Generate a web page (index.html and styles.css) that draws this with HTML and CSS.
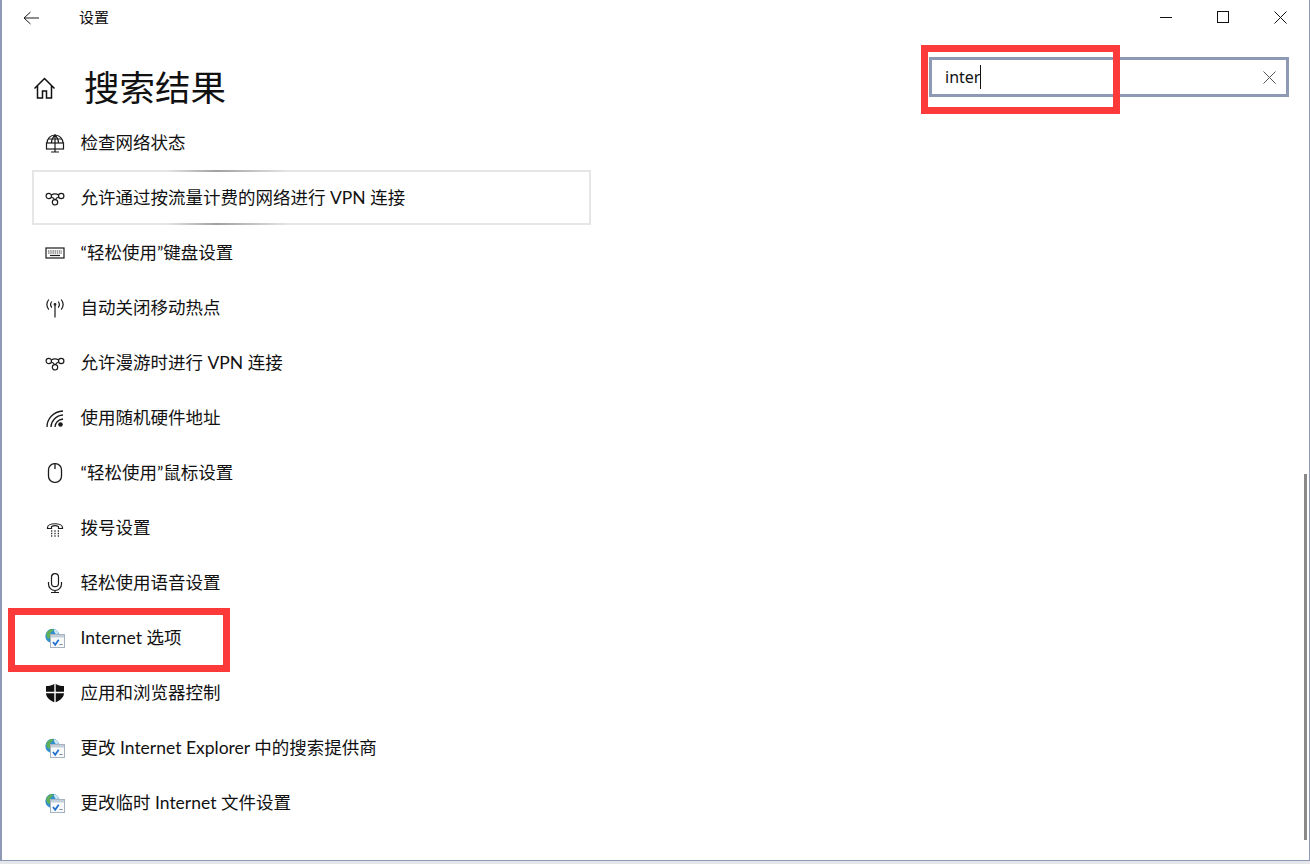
FILE: index.html
```html
<!DOCTYPE html>
<html lang="zh-CN">
<head>
<meta charset="utf-8">
<title>设置</title>
<link rel="stylesheet" href="styles.css">
</head>
<body>
<svg class="defs" width="0" height="0" aria-hidden="true">
  <defs>
    <symbol id="vpn" viewBox="0 0 20 20">
      <g fill="none" stroke="#1a1a1a" stroke-width="1.200">
        <circle cx="3.800" cy="8" r="2.700"/><circle cx="16.200" cy="8" r="2.700"/><circle cx="10" cy="14.300" r="2.700"/>
        <path d="M6.300 9c1.700.7 2.900 1.800 3.300 2.800M13.700 9c-1.700.7-2.900 1.800-3.300 2.800M6.300 7c2.200-1.400 5.200-1.400 7.400 0"/>
      </g>
    </symbol>
    <symbol id="ie" viewBox="0 0 20 20">
      <circle cx="7.500" cy="8" r="7.200" fill="#2f8fd0"/>
      <path d="M1.500 5c1.500-2.500 4-4 6-4 1.500 0 1 2-.5 2.500S5 6 5.500 8 4.500 11.500 3 10.500 1 7 1.500 5z" fill="#5fae5a"/>
      <path d="M9 1.200c2.500.5 4.300 2 5 4.300l-3 .5C10 5 8.500 3 9 1.200z" fill="#cfe6f3"/>
      <rect x="5.500" y="6.500" width="14" height="13" fill="#f7f9fb" stroke="#a7b3bf" stroke-width="1"/>
      <rect x="6" y="7" width="13" height="2.500" fill="#c3cfda"/>
      <path d="M8 14l2.200 2.800 3.500-5" fill="none" stroke="#1f6fd0" stroke-width="1.700"/>
      <path d="M14.500 16.500h3" stroke="#7d8a96" stroke-width="1"/>
    </symbol>
  </defs>
</svg>
<div class="window">
  <header class="titlebar">
    <svg class="back" width="16" height="14" viewBox="0 0 16 14"><path d="M7.500 1L1 7l6.500 6M1 7h15" fill="none" stroke="#1a1a1a" stroke-width="1"/></svg>
    <span class="app-name">设置</span>
    <div class="controls">
      <svg width="13" height="13" viewBox="0 0 13 13"><path d="M0 6.500h12" stroke="#111" stroke-width="1"/></svg>
      <svg width="13" height="13" viewBox="0 0 13 13"><rect x="0.500" y="0.500" width="11" height="11" fill="none" stroke="#111" stroke-width="1"/></svg>
      <svg width="13" height="13" viewBox="0 0 13 13"><path d="M0.500 0.500l12 12M12.500 0.500l-12 12" stroke="#111" stroke-width="1"/></svg>
    </div>
  </header>
  <div class="header">
    <svg class="home" width="23" height="23" viewBox="0 0 23 23"><path d="M1.500 11.500L11.500 1.500l10 10M4.500 9v12h5v-7h4v7h5V9" fill="none" stroke="#111" stroke-width="1.500"/></svg>
    <h1>搜索结果</h1>
    <div class="search">
      <span class="query">inter</span><span class="caret"></span>
      <svg class="clear" width="13" height="13" viewBox="0 0 13 13"><path d="M0.500 0.500l12 12M12.500 0.500l-12 12" stroke="#555" stroke-width="1"/></svg>
    </div>
  </div>
  <ul class="results">
    <li class="row">
      <svg class="ico" width="20" height="20" viewBox="0 0 20 20"><g fill="none" stroke="#1a1a1a" stroke-width="1.200"><path d="M2 10a8 8 0 0 1 16 0"/><path d="M6.500 10c0-3 1.500-6 3.500-8 2 2 3.500 5 3.500 8M10 2v8M3 6h14"/><rect x="1.500" y="10" width="17" height="6"/><path d="M10 16v3M6 19h8M10 10v6"/></g></svg>
      <span>检查网络状态</span>
    </li>
    <li class="row selected">
      <svg class="ico" width="20" height="20"><use href="#vpn"/></svg>
      <span>允许通过按流量计费的网络进行 VPN 连接</span>
    </li>
    <li class="row">
      <svg class="ico" width="20" height="20" viewBox="0 0 20 20"><rect x="1" y="5" width="18" height="10" fill="none" stroke="#1a1a1a" stroke-width="1.200"/><path d="M3 8h14M3 10h14" stroke="#444" stroke-width="1.200" stroke-dasharray="1.500 .7"/><path d="M5 12.500h10" stroke="#1a1a1a" stroke-width="1.200"/></svg>
      <span>“轻松使用”键盘设置</span>
    </li>
    <li class="row">
      <svg class="ico" width="20" height="20" viewBox="0 0 20 20"><g fill="none" stroke="#1a1a1a" stroke-width="1.200"><path d="M10 7.500V19.500"/><circle cx="10" cy="6.500" r=".8"/><path d="M6.800 3.500c-1.400 1.800-1.400 4.400 0 6.200M13.200 3.500c1.400 1.800 1.400 4.400 0 6.200M3.800 1.500c-2.300 3-2.300 7.200 0 10.200M16.200 1.500c2.300 3 2.300 7.200 0 10.200"/></g></svg>
      <span>自动关闭移动热点</span>
    </li>
    <li class="row">
      <svg class="ico" width="20" height="20"><use href="#vpn"/></svg>
      <span>允许漫游时进行 VPN 连接</span>
    </li>
    <li class="row">
      <svg class="ico" width="20" height="20" viewBox="0 0 20 20"><g fill="none" stroke="#1a1a1a" stroke-width="1.300"><path d="M2 19C2 11 8 3.500 18 3"/><path d="M6 19c0-6 5-11.500 12-12"/><path d="M10 19c0-4 3-7.500 8-8"/></g><circle cx="15.500" cy="16.500" r="2.300" fill="#1a1a1a"/></svg>
      <span>使用随机硬件地址</span>
    </li>
    <li class="row">
      <svg class="ico" width="20" height="20" viewBox="0 0 20 20"><rect x="3.500" y="0.700" width="13" height="18.600" rx="6" fill="none" stroke="#1a1a1a" stroke-width="1.300"/><path d="M10 1v5" stroke="#1a1a1a" stroke-width="1.300"/></svg>
      <span>“轻松使用”鼠标设置</span>
    </li>
    <li class="row">
      <svg class="ico" width="20" height="20" viewBox="0 0 20 20"><path d="M2.500 9.500c0-5 15-5 15 0v1h-4V8.500c-2-1-5-1-7 0v2h-4z" fill="none" stroke="#1a1a1a" stroke-width="1.200"/><path d="M6 13h8M6 15.500h8M6 18h8" stroke="#333" stroke-width="1.300" stroke-dasharray="1.300 2.050"/></svg>
      <span>拨号设置</span>
    </li>
    <li class="row">
      <svg class="ico" width="20" height="20" viewBox="0 0 20 20"><g fill="none" stroke="#1a1a1a" stroke-width="1.200"><rect x="6.500" y="0.700" width="7" height="13" rx="3.500"/><path d="M3.500 9v2a6.500 6.500 0 0 0 13 0V9M10 17.500V20M6 19.500h8"/></g></svg>
      <span>轻松使用语音设置</span>
    </li>
    <li class="row">
      <svg class="ico" width="20" height="20"><use href="#ie"/></svg>
      <span>Internet 选项</span>
    </li>
    <li class="row">
      <svg class="ico" width="20" height="20" viewBox="0 0 20 20"><path d="M10 0.500c3 2 5.500 2.500 9 2.500v7c0 4-3.500 7.500-9 9.500C4.500 17.500 1 14 1 10V3c3.500 0 6-.5 9-2.500z" fill="#111"/><path d="M10 0v20M0.500 9.500h19" stroke="#fff" stroke-width="1.400"/></svg>
      <span>应用和浏览器控制</span>
    </li>
    <li class="row">
      <svg class="ico" width="20" height="20"><use href="#ie"/></svg>
      <span>更改 Internet Explorer 中的搜索提供商</span>
    </li>
    <li class="row">
      <svg class="ico" width="20" height="20"><use href="#ie"/></svg>
      <span>更改临时 Internet 文件设置</span>
    </li>
  </ul>
  <div class="scrollbar"></div>
  <div class="mark mark-search"></div>
  <div class="mark mark-option"></div>
</div>
</body>
</html>
```
FILE: styles.css
```css
* { box-sizing: border-box; }
html, body { margin: 0; padding: 0; }
body {
  width: 1310px;
  height: 864px;
  overflow: hidden;
  background: #e6e7ea;
  color: #111;
  font-family: "Lato", "Noto Sans CJK SC", sans-serif;
}
.defs { position: absolute; }
.window {
  position: relative;
  display: flex;
  flex-direction: column;
  width: 1310px;
  height: 861px;
  background: #fff;
  border-left: 2px solid #8e9ab5;
  border-right: 1px solid #8e9ab5;
  border-bottom: 1px solid #8e9ab5;
}
.titlebar {
  display: flex;
  align-items: center;
  flex: none;
  height: 35px;
  padding-left: 21px;
}
.back { flex: none; }
.app-name {
  margin: 0 0 3px 40px;
  font-size: 15px;
}
.controls {
  display: flex;
  align-items: center;
  gap: 44px;
  margin-left: auto;
  padding-right: 22px;
}
.header {
  display: flex;
  align-items: center;
  flex: none;
  height: 80px;
  padding: 0 20px 0 31px;
}
.home {
  flex: none;
  margin-top: 26px;
}
h1 {
  margin: 25px 0 0 28px;
  font-size: 35.500px;
  font-weight: 400;
  line-height: 50px;
}
.search {
  display: flex;
  align-items: center;
  width: 360px;
  height: 40px;
  margin: 4px 0 0 auto;
  padding: 0 10px 0 13px;
  border: 3px solid #8e9ab5;
}
.query {
  font-family: "Noto Sans", sans-serif;
  font-size: 16px;
}
.caret {
  width: 1px;
  height: 24px;
  background: #111;
}
.clear { margin-left: auto; }
.results {
  flex: none;
  margin: 0;
  padding: 0 0 0 30px;
  list-style: none;
}
.row {
  display: flex;
  align-items: center;
  gap: 15.500px;
  width: 559px;
  height: 55px;
  padding-left: 13px;
  font-size: 17.500px;
  white-space: nowrap;
}
.row span { margin-bottom: 2px; }
.selected {
  border: 2px solid #e4e4e4;
  padding-left: 11px;
  border-image: linear-gradient(90deg, #e6e6e6 0, #e6e6e6 24%, #a0a0a0 33%, #e6e6e6 46%, #e6e6e6 100%) 2;
}
.ico { flex: none; }
.scrollbar {
  position: absolute;
  top: 474px;
  right: 2px;
  width: 3px;
  height: 366px;
  background: #8a8a8a;
}
.mark {
  position: absolute;
  border: 7px solid #fc3a3a;
  pointer-events: none;
}
.mark-search {
  top: 45px;
  left: 919px;
  width: 199px;
  height: 69px;
}
.mark-option {
  top: 608px;
  left: 6px;
  width: 222px;
  height: 64px;
}
```
